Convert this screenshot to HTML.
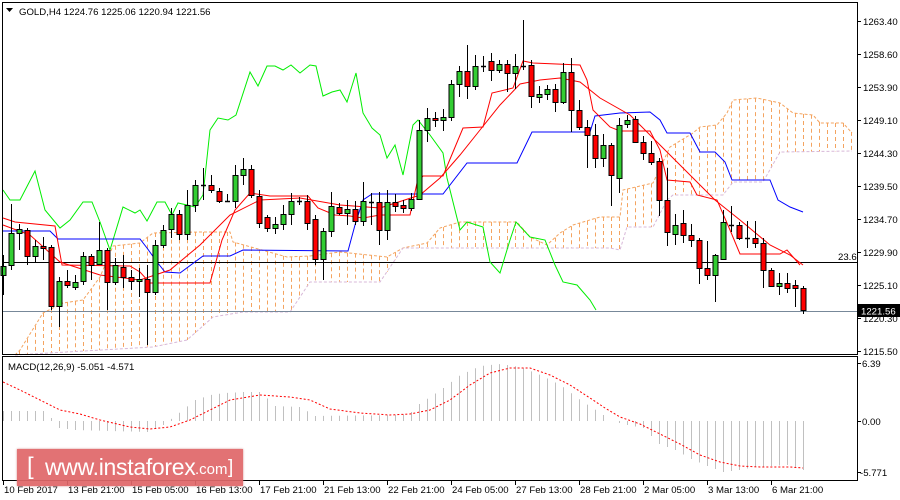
<!DOCTYPE html>
<html><head><meta charset="utf-8">
<style>
html,body{margin:0;padding:0;background:#fff;width:900px;height:500px;overflow:hidden}
svg{display:block}
text{font-family:"Liberation Sans","DejaVu Sans",sans-serif;font-size:10.5px;fill:#000}
text.d{font-size:9.6px}
.wm{position:absolute;left:17px;top:449px;width:226px;height:37px;background:#e0686a;opacity:0.93;box-shadow:0 0 2px #d08080;color:#fff;font-family:"Liberation Sans",sans-serif;white-space:nowrap}
</style></head><body>
<svg id="s" width="900" height="500" xmlns="http://www.w3.org/2000/svg"></svg>
<div class="wm"><span style="position:absolute;left:10px;top:4px;font-size:24px;font-weight:300">[</span><span style="position:absolute;left:28px;top:5px;font-size:23px;letter-spacing:-0.3px">www.instaforex</span><span style="position:absolute;left:178px;top:12px;font-size:15px">.com</span><span style="position:absolute;left:211px;top:8px;font-size:19px">]</span></div>
<script>
(function(){
var NS="http://www.w3.org/2000/svg",S=document.getElementById('s');
function el(t,a,txt){var e=document.createElementNS(NS,t);for(var k in a)e.setAttribute(k,a[k]);if(txt!==undefined)e.textContent=txt;S.appendChild(e);return e;}
function pl(pts,c,extra){var a={points:pts.map(function(p){return p.join(',')}).join(' '),fill:'none',stroke:c,'stroke-width':1};for(var k in extra)a[k]=extra[k];return el('polyline',a);}
var ctop=[[15,355],[20,350],[43,313],[63,303],[83,300],[100,277],[113,246],[140,243],[153,233],[200,232],[230,232],[233,242],[287,257],[310,256],[340,252],[387,257],[403,248],[427,243],[440,228],[460,222],[517,222],[530,237],[547,245],[560,233],[573,225],[600,217],[620,217],[623,190],[653,183],[670,147],[693,133],[700,127],[717,125],[727,113],[733,100],[757,98],[780,103],[793,113],[813,115],[820,123],[843,123],[852,133],[852,151]];
var cbot=[[15,355],[153,347],[187,340],[213,317],[243,312],[290,312],[310,282],[380,282],[403,248],[610,248],[620,250],[627,227],[653,227],[667,200],[673,195],[723,195],[733,182],[763,182],[780,152],[852,151]];
function interp(arr,x){for(var i=0;i<arr.length-1;i++){if(x>=arr[i][0]&&x<=arr[i+1][0]){var t=(x-arr[i][0])/((arr[i+1][0]-arr[i][0])||1);return arr[i][1]+t*(arr[i+1][1]-arr[i][1]);}}return null;}
for(var x=19;x<=851;x+=8){var a=interp(ctop,x),b=interp(cbot,x);if(a==null||b==null)continue;var y1=Math.min(a,b),y2=Math.max(a,b);if(y2-y1<2)continue;el('line',{x1:x+0.5,y1:y1,x2:x+0.5,y2:y2,stroke:'#f4a460','stroke-width':1,'stroke-dasharray':'4,3'});}
pl(ctop.slice(0,-1),'#f4a460',{'stroke-dasharray':'3,2'});
pl(cbot,'#d8b8d8',{'stroke-dasharray':'3,2'});
el('line',{x1:3,y1:262.5,x2:857,y2:262.5,stroke:'#000'});
el('line',{x1:3,y1:311.5,x2:857,y2:311.5,stroke:'#778899'});
pl([[3,190],[10,200],[20,200],[35,171],[45,210],[60,228],[70,220],[83,202],[92,202],[100,222],[110,250],[123,207],[135,213],[140,210],[147,221],[157,202],[165,202],[172,215],[178,203],[187,205],[195,207],[203,195],[210,130],[218,118],[228,120],[236,115],[250,72],[258,86],[267,66],[275,66],[283,70],[291,65],[300,73],[310,65],[316,66],[323,96],[332,92],[340,90],[347,102],[356,73],[363,113],[372,128],[380,135],[387,158],[395,145],[403,175],[413,125],[418,120],[430,135],[443,153],[447,178],[460,230],[467,222],[483,227],[490,262],[500,273],[510,240],[516,222],[530,237],[545,240],[555,265],[563,282],[577,285],[590,300],[596,310]],'#00ee00');
pl([[3,231],[50,231],[58,239],[140,239],[147,248],[157,262],[165,272],[180,273],[203,256],[230,256],[243,250],[348,251],[355,225],[363,200],[372,194],[443,194],[467,163],[517,163],[532,132],[590,132],[595,116],[620,113],[650,112],[660,120],[667,133],[690,133],[700,152],[715,152],[725,162],[732,180],[770,180],[778,200],[790,207],[803,212]],'#0000ff');
pl([[3,218],[15,222],[55,226],[62,265],[130,266],[140,272],[150,283],[210,283],[222,240],[235,210],[250,193],[270,196],[308,196],[318,208],[335,215],[350,216],[363,218],[380,215],[410,215],[417,183],[423,176],[443,176],[453,152],[463,128],[483,127],[492,93],[513,88],[523,61],[533,63],[580,65],[587,80],[593,110],[610,127],[620,131],[650,131],[660,150],[667,180],[690,182],[697,195],[717,200],[730,230],[740,254],[780,254],[787,250],[800,265]],'#ff0000');
pl([[3,225],[30,235],[60,262],[100,275],[140,280],[170,270],[200,245],[230,215],[260,200],[300,198],[340,205],[380,208],[420,195],[440,178],[460,155],[480,130],[500,105],[520,84],[540,80],[560,78],[580,82],[600,98],[630,115],[660,145],[690,175],[715,200],[740,220],[770,245],[790,255],[803,265]],'#ff0000');
var C=[['g',266,275,255,295],['g',233,265,204,270],['g',229,233,224,250],['r',230,256,228,265],['g',246,256,240,262],['r',246,248,237,260],['r',247,306,245,310],['g',281,306,277,327],['r',281,285,270,288],['g',282,287,275,290],['g',256,281,252,285],['r',256,265,254,280],['g',250,264,222,265],['r',250,282,248,310],['g',265,282,258,285],['r',267,277,255,288],['r',277,281,270,290],['g',279,281,268,297],['r',279,292,265,345],['g',245,292,240,295],['g',230,245,225,248],['g',214,229,208,238],['r',214,234,210,240],['g',205,234,190,240],['g',185,205,180,212],['d',185,185,168,200],['r',185,190,175,193],['r',191,201,188,203],['d',201,201,194,202],['g',175,201,165,208],['g',169,175,158,185],['r',169,195,165,198],['r',196,223,190,228],['r',217,228,215,232],['g',224,228,217,234],['g',214,224,205,230],['g',201,214,193,225],['d',201,201,197,205],['r',201,223,195,230],['r',219,259,215,265],['g',231,259,228,280],['g',206,231,192,237],['r',207,213,203,215],['g',209,213,200,225],['r',209,221,201,225],['g',201,221,182,226],['d',202,202,193,225],['r',202,230,192,245],['g',202,230,190,240],['r',202,206,194,212],['r',205,208,200,213],['g',199,208,193,211],['g',130,199,120,200],['g',118,130,108,142],['r',118,120,112,127],['g',117,120,109,131],['g',84,117,80,121],['g',71,84,66,97],['r',71,86,45,99],['g',66,86,55,90],['d',66,66,56,72],['r',61,70,53,81],['g',64,70,60,73],['r',64,73,60,92],['g',66,73,54,89],['d',66,66,20,70],['r',65,96,60,108],['g',94,97,86,103],['g',89,94,85,100],['r',89,102,84,112],['g',72,102,63,104],['r',72,110,58,132],['r',110,127,100,130],['r',127,135,120,168],['r',135,158,124,168],['g',145,158,134,167],['r',145,175,143,206],['g',125,178,118,193],['g',120,124,115,128],['r',119,142,116,143],['r',142,153,136,160],['r',153,162,141,165],['r',161,200,158,216],['r',200,232,168,246],['g',225,234,214,245],['r',223,235,210,243],['r',235,240,224,247],['r',240,268,238,284],['r',268,275,241,280],['g',255,275,254,302],['g',222,259,210,259],['d',225,225,206,232],['r',225,238,222,240],['d',238,238,221,248],['r',238,243,221,248],['r',243,270,238,288],['r',270,286,268,287],['g',283,286,273,295],['r',283,288,273,293],['r',285,288,280,307],['r',288,310,286,314]];
C.forEach(function(c,i){var x=3+8*i;el('line',{x1:x+0.5,y1:c[3],x2:x+0.5,y2:c[4],stroke:'#000'});
if(c[0]=='d'){el('line',{x1:x-2,y1:c[1]+0.5,x2:x+3,y2:c[1]+0.5,stroke:'#000','stroke-width':1.5});}
else el('rect',{x:x-2,y:c[1]+0.5,width:5,height:Math.max(c[2]-c[1],2),fill:c[0]=='g'?'#32cd32':'#ff0000',stroke:'#000','stroke-width':1});});
var H=[[3,411],[43,411],[51,418],[59,428],[75,430],[147,432],[163,425],[180,412],[195,400],[210,395],[225,393],[243,392],[260,392],[275,406],[300,407],[315,416],[400,415],[410,413],[420,403],[430,397],[443,388],[460,375],[480,366],[500,364],[520,367],[540,375],[560,385],[580,400],[603,415],[611,421],[627,425],[643,428],[659,444],[675,450],[691,459],[707,466],[723,472],[739,470],[755,467],[771,466],[787,465],[803,470]];
for(var i=0;i<=100;i++){var x2=3+8*i,y=interp(H,x2);if(y==null)continue;if(Math.abs(y-421)<1)continue;el('line',{x1:x2+0.5,y1:421,x2:x2+0.5,y2:y,stroke:'#c0c0c0'});}
pl([[3,382],[20,390],[40,400],[60,410],[80,414],[100,420],[130,427],[150,429],[170,427],[190,420],[210,410],[230,400],[260,395],[290,397],[310,400],[330,409],[360,413],[390,415],[410,414],[430,410],[450,400],[470,385],[490,373],[510,368],[530,368],[550,375],[570,385],[590,398],[605,408],[620,417],[640,424],[660,434],[680,444],[700,455],[720,462],[740,466],[760,467],[790,467],[803,468]],'#ff0000',{'stroke-dasharray':'2,2'});
el('rect',{x:2.5,y:2.5,width:855,height:352,fill:'none',stroke:'#000'});
el('rect',{x:2.5,y:356.5,width:855,height:124,fill:'none',stroke:'#000'});
var P=[['1263.40',21],['1258.60',54],['1253.90',87],['1249.10',120],['1244.30',153],['1239.50',186],['1234.70',219],['1229.90',252],['1225.10',285],['1220.30',318],['1215.50',351]];
P.forEach(function(p){el('line',{x1:858,y1:p[1]+0.5,x2:861,y2:p[1]+0.5,stroke:'#000'});el('text',{x:863,y:p[1]+4,'class':'d'},p[0]);});
el('rect',{x:858,y:304,width:42,height:13,fill:'#000'});
el('text',{x:861,y:314.5,style:'fill:#fff','class':'d'},'1221.56');
el('text',{x:838,y:260,'class':'d'},'23.6');
[['6.39',363],['0.00',421],['-5.771',472]].forEach(function(p){el('line',{x1:858,y1:p[1]+0.5,x2:861,y2:p[1]+0.5,stroke:'#000'});el('text',{x:p[0][0]=='-'?860:862,y:p[1]+4,'class':'d'},p[0]);});
var D=['10 Feb 2017','13 Feb 21:00','15 Feb 05:00','16 Feb 13:00','17 Feb 21:00','21 Feb 13:00','22 Feb 21:00','24 Feb 05:00','27 Feb 13:00','28 Feb 21:00','2 Mar 05:00','3 Mar 13:00','6 Mar 21:00'];
D.forEach(function(d,i){var x3=3+64*i;el('line',{x1:x3+0.5,y1:481,x2:x3+0.5,y2:485,stroke:'#000'});el('text',{x:x3+1,y:493,'class':'d'},d);});
el('text',{x:19,y:15,'class':'d'},'GOLD,H4  1224.76 1225.06 1220.94 1221.56');
el('polygon',{points:'6,8 13,8 9.5,12',fill:'#000'});
el('text',{x:8,y:370,'class':'d'},'MACD(12,26,9) -5.051 -4.571');
})();
</script>
</body></html>
